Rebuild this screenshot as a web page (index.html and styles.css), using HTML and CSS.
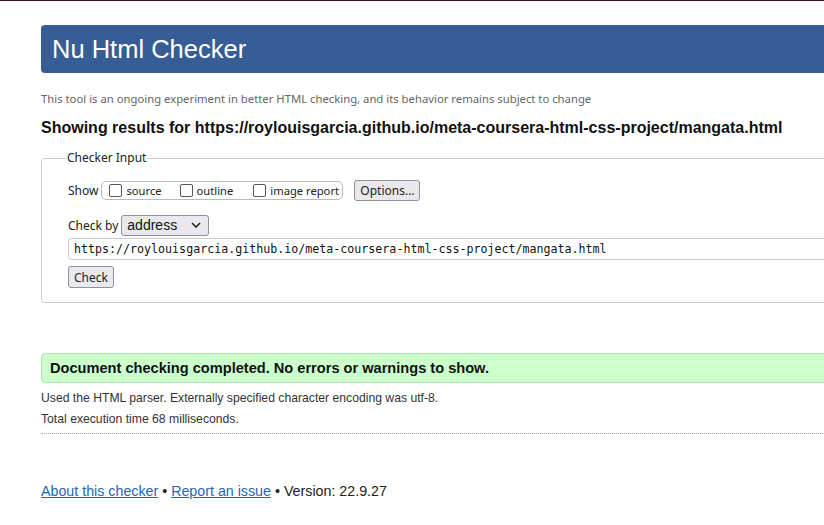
FILE: index.html
```html
<!DOCTYPE html>
<html>
<head>
<meta charset="utf-8">
<link rel="stylesheet" href="styles.css">
</head>
<body>
<div class="topline"></div>
<div class="page">
  <h1 class="banner">Nu Html Checker</h1>
  <p class="lede">This tool is an ongoing experiment in better HTML checking, and its behavior remains subject to change</p>
  <h2 class="showing">Showing results for https://roylouisgarcia.github.io/meta-coursera-html-css-project/mangata.html</h2>
  <fieldset class="input">
    <legend>Checker Input</legend>
    <div class="row show-row">
      <span class="lbl">Show</span>
      <span class="group">
        <label class="cb"><span class="box"></span>source</label>
        <label class="cb cb-outline"><span class="box"></span>outline</label>
        <label class="cb cb-image"><span class="box"></span>image report</label>
      </span>
      <span class="btn opts">Options...</span>
    </div>
    <div class="row by-row">
      <span class="lbl">Check by</span>
      <span class="select">address<svg class="chev" width="10" height="6" viewBox="0 0 10 6"><path d="M1 1l4 4 4-4" fill="none" stroke="#222" stroke-width="1.6"/></svg></span>
    </div>
    <div class="url">https://roylouisgarcia.github.io/meta-coursera-html-css-project/mangata.html</div>
    <span class="btn check">Check</span>
  </fieldset>
  <div class="success">Document checking completed. No errors or warnings to show.</div>
  <p class="info">Used the HTML parser. Externally specified character encoding was utf-8.</p>
  <p class="info">Total execution time 68 milliseconds.</p>
  <div class="dotted"></div>
  <p class="footer"><a href="#">About this checker</a> • <a href="#">Report an issue</a> • Version: 22.9.27</p>
</div>
</body>
</html>
```
FILE: styles.css
```css
html, body {
  margin: 0;
  padding: 0;
  background: #fff;
  overflow: hidden;
}
body {
  width: 824px;
  height: 525px;
  font-family: "Liberation Sans", Arial, sans-serif;
  color: #222;
}
.topline {
  height: 1px;
  background: #3c1418;
}
.page {
  padding-left: 41px;
  width: 1000px;
}
.banner {
  margin: 24px 0 0 0;
  height: 48px;
  background: #365d95;
  color: #fff;
  border-radius: 4px;
  font-weight: normal;
  font-size: 25.5px;
  line-height: 48px;
  padding-left: 11px;
}
.lede {
  margin: 18px 0 0 0;
  font-family: "Noto Sans", sans-serif;
  font-size: 11.3px;
  color: #666;
  line-height: 16px;
}
.showing {
  margin: 11px 0 0 0;
  font-size: 16px;
  font-weight: bold;
  line-height: 20px;
  color: #111;
}
.input {
  margin: 12px 0 0 0;
  border: 1px solid #ccc;
  border-radius: 4px;
  padding: 0 0 14px 26px;
  font-family: "Noto Sans", sans-serif;
  font-size: 12px;
  color: #222;
}
.input legend {
  margin-left: -2px;
  padding: 0 1px;
  font-size: 12px;
  line-height: 16px;
}
.row {
  display: flex;
  align-items: center;
}
.show-row {
  margin-top: 14px;
  height: 20px;
}
.lbl {
  margin-right: 3px;
}
.group {
  display: flex;
  flex-shrink: 0;
  align-items: center;
  height: 17px;
  border: 1px solid #bbb;
  border-radius: 5px;
  padding: 0 0 0 7px;
  font-size: 11.2px;
  width: 233px;
  white-space: nowrap;
}
.cb {
  display: flex;
  align-items: center;
  white-space: nowrap;
}
.cb-outline { margin-left: 18px; }
.cb-image { margin-left: 20px; }
.box {
  flex-shrink: 0;
  width: 11px;
  height: 11px;
  border: 1px solid #555;
  border-radius: 2px;
  margin-right: 4px;
}
.btn {
  display: inline-flex;
  align-items: center;
  justify-content: center;
  background: #e9e9ed;
  border: 1px solid #8f8f9d;
  border-radius: 3px;
  box-sizing: border-box;
  font-size: 12px;
}
.opts {
  margin-left: 11px;
  width: 66px;
  height: 21px;
}
.by-row {
  margin-top: 15px;
  height: 20px;
}
.select {
  display: inline-flex;
  align-items: center;
  justify-content: space-between;
  box-sizing: border-box;
  width: 88px;
  height: 21px;
  border: 1px solid #8f8f9d;
  border-radius: 3px;
  background: #e9e9ed;
  padding: 0 7px 0 5px;
  font-family: "Liberation Sans", Arial, sans-serif;
  font-size: 14px;
  color: #111;
}
.url {
  margin-top: 3px;
  height: 20px;
  border: 1px solid #ccc;
  border-right: none;
  border-radius: 4px 0 0 4px;
  padding-left: 5px;
  font-family: "DejaVu Sans Mono", monospace;
  font-size: 11.65px;
  line-height: 20px;
  color: #111;
}
.check {
  margin-top: 6px;
  width: 46px;
  height: 22px;
}
.success {
  margin-top: 50px;
  height: 28px;
  box-sizing: content-box;
  border: 1px solid #b4e0b4;
  border-radius: 4px;
  background: #ccffcc;
  padding-left: 8px;
  font-weight: bold;
  font-size: 14.6px;
  line-height: 28px;
  color: #111;
}
.info {
  margin: 8px 0 0 0;
  font-size: 12.2px;
  line-height: 15px;
  color: #333;
}
.info + .info { margin-top: 6px; }
.dotted {
  margin-top: 6px;
  border-top: 1px dotted #aaa;
}
.footer {
  margin: 48px 0 0 0;
  font-size: 14.25px;
  line-height: 18px;
  color: #222;
}
.footer a {
  color: #2266bb;
}
```
